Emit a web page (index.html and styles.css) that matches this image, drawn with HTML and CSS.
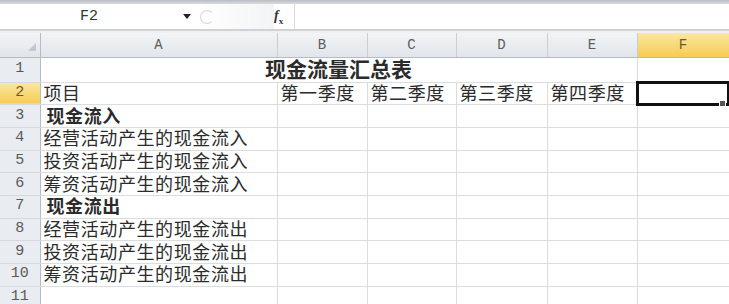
FILE: index.html
```html
<!DOCTYPE html>
<html lang="zh-CN">
<head>
    <meta charset="UTF-8">
    <title>现金流量汇总表</title>
    <link rel="stylesheet" href="styles.css">
</head>
<body>
    <div class="title-strip"></div>
    <div class="formula-bar">
        <div class="name-box">F2</div>
        <div class="name-drop">
            <svg width="8" height="5" viewBox="0 0 8 5"><path d="M0 0h8L4 5z" fill="#222"/></svg>
        </div>
        <div class="grip"><span></span></div>
        <div class="fx"><i>f</i><sub>x</sub></div>
        <div class="formula-input"></div>
    </div>
    <div class="bar-gap"></div>

    <table class="sheet">
        <colgroup>
            <col class="col-row">
            <col class="col-a">
            <col class="col-b">
            <col class="col-c">
            <col class="col-d">
            <col class="col-e">
            <col class="col-f">
        </colgroup>
        <thead>
            <tr>
                <th class="corner">
                    <svg width="8" height="8" viewBox="0 0 8 8"><path d="M8 0v8H0z" fill="#c3c8ce"/></svg>
                </th>
                <th>A</th>
                <th>B</th>
                <th>C</th>
                <th>D</th>
                <th>E</th>
                <th class="active">F</th>
            </tr>
        </thead>
        <tbody>
            <tr>
                <th>1</th>
                <td colspan="5" class="title">现金流量汇总表</td>
                <td></td>
            </tr>
            <tr>
                <th class="active">2</th>
                <td>项目</td>
                <td>第一季度</td>
                <td>第二季度</td>
                <td>第三季度</td>
                <td>第四季度</td>
                <td class="selected"><span class="fill-handle"></span></td>
            </tr>
            <tr>
                <th>3</th>
                <td class="bold">现金流入</td>
                <td></td><td></td><td></td><td></td><td></td>
            </tr>
            <tr>
                <th>4</th>
                <td>经营活动产生的现金流入</td>
                <td></td><td></td><td></td><td></td><td></td>
            </tr>
            <tr>
                <th>5</th>
                <td>投资活动产生的现金流入</td>
                <td></td><td></td><td></td><td></td><td></td>
            </tr>
            <tr>
                <th>6</th>
                <td>筹资活动产生的现金流入</td>
                <td></td><td></td><td></td><td></td><td></td>
            </tr>
            <tr>
                <th>7</th>
                <td class="bold">现金流出</td>
                <td></td><td></td><td></td><td></td><td></td>
            </tr>
            <tr>
                <th>8</th>
                <td>经营活动产生的现金流出</td>
                <td></td><td></td><td></td><td></td><td></td>
            </tr>
            <tr>
                <th>9</th>
                <td>投资活动产生的现金流出</td>
                <td></td><td></td><td></td><td></td><td></td>
            </tr>
            <tr>
                <th>10</th>
                <td>筹资活动产生的现金流出</td>
                <td></td><td></td><td></td><td></td><td></td>
            </tr>
            <tr>
                <th>11</th>
                <td></td><td></td><td></td><td></td><td></td><td></td>
            </tr>
        </tbody>
    </table>
</body>
</html>
```

FILE: styles.css
```css
body {
    margin: 0;
    width: 729px;
    height: 304px;
    overflow: hidden;
    background-color: #fff;
    font-family: "Noto Sans CJK SC", sans-serif;
    color: #2b2b2b;
}
.title-strip {
    height: 4px;
    background: linear-gradient(#b9bdc2, #d9dcdf);
}
.formula-bar {
    display: flex;
    align-items: center;
    height: 25px;
    background-color: #fff;
    border-bottom: 2px solid #cfd3d8;
}
.name-box {
    width: 178px;
    text-align: center;
    font-family: "Liberation Mono", monospace;
    font-size: 15px;
    color: #333;
}
.name-drop {
    width: 18px;
    display: flex;
    justify-content: center;
}
.grip {
    width: 78px;
    height: 25px;
    display: flex;
    align-items: center;
    background: linear-gradient(90deg, #fff, #f3f4f5);
}
.grip span {
    width: 12px;
    height: 12px;
    border-radius: 50%;
    border: 1px solid #d3d5d8;
    border-right-color: transparent;
    margin-left: 4px;
}
.fx {
    width: 20px;
    font-family: "Liberation Serif", serif;
    font-size: 14px;
    font-weight: bold;
    color: #333;
    border-right: 1px solid #d6d9dd;
    height: 25px;
    line-height: 24px;
}
.fx sub {
    font-size: 9px;
}
.formula-input {
    flex: 1;
    height: 25px;
    background-color: #fff;
}
.bar-gap {
    height: 2px;
    background-color: #eef0f2;
}

.sheet {
    border-collapse: collapse;
    table-layout: fixed;
    width: 729px;
}
.col-row { width: 40px; }
.col-a { width: 237px; }
.col-b { width: 90px; }
.col-c { width: 89px; }
.col-d { width: 91px; }
.col-e { width: 90px; }
.col-f { width: 92px; }

.sheet thead tr {
    height: 24px;
}
.sheet tbody tr {
    height: 22.7px;
}
.sheet thead th {
    padding: 0;
    background: linear-gradient(#f2f4f6, #e1e5ea);
    border-right: 1px solid #c9ced5;
    border-bottom: 1px solid #b4bcc6;
    font-family: "Liberation Mono", monospace;
    font-size: 14px;
    font-weight: normal;
    line-height: 1;
    color: #5c5c5c;
}
.sheet thead th.corner {
    text-align: right;
    vertical-align: bottom;
    padding: 0 4px 3px 0;
    border-right-color: #b4bcc6;
}
.sheet thead th.active {
    background: linear-gradient(#fbe7a3, #f5cb52);
    color: #6b5a2a;
}
.sheet tbody th {
    padding: 0 0 2px;
    background-color: #e9ecf0;
    border-right: 1px solid #b4bcc6;
    border-bottom: 1px solid #d6dae0;
    font-family: "Liberation Mono", monospace;
    font-size: 15px;
    font-weight: normal;
    line-height: 1;
    color: #5a5a5a;
}
.sheet tbody th.active {
    background: linear-gradient(#fbe7a3, #f5cb52);
    color: #6b5a2a;
}
.sheet td {
    padding: 0 3px 3px;
    border: 1px solid #dadcdf;
    font-size: 18px;
    line-height: 1;
    letter-spacing: 0.6px;
    white-space: nowrap;
}
.sheet td.title {
    text-align: center;
    font-size: 21px;
    font-weight: bold;
    letter-spacing: 0;
}
.sheet td.bold {
    font-weight: bold;
    padding-left: 6px;
}
.sheet td.selected {
    position: relative;
    padding: 0;
    outline: 3px solid #111;
    outline-offset: -2px;
}
.fill-handle {
    position: absolute;
    right: 3px;
    bottom: -3px;
    width: 5px;
    height: 5px;
    background-color: #555;
    border: 1px solid #fff;
}
```
